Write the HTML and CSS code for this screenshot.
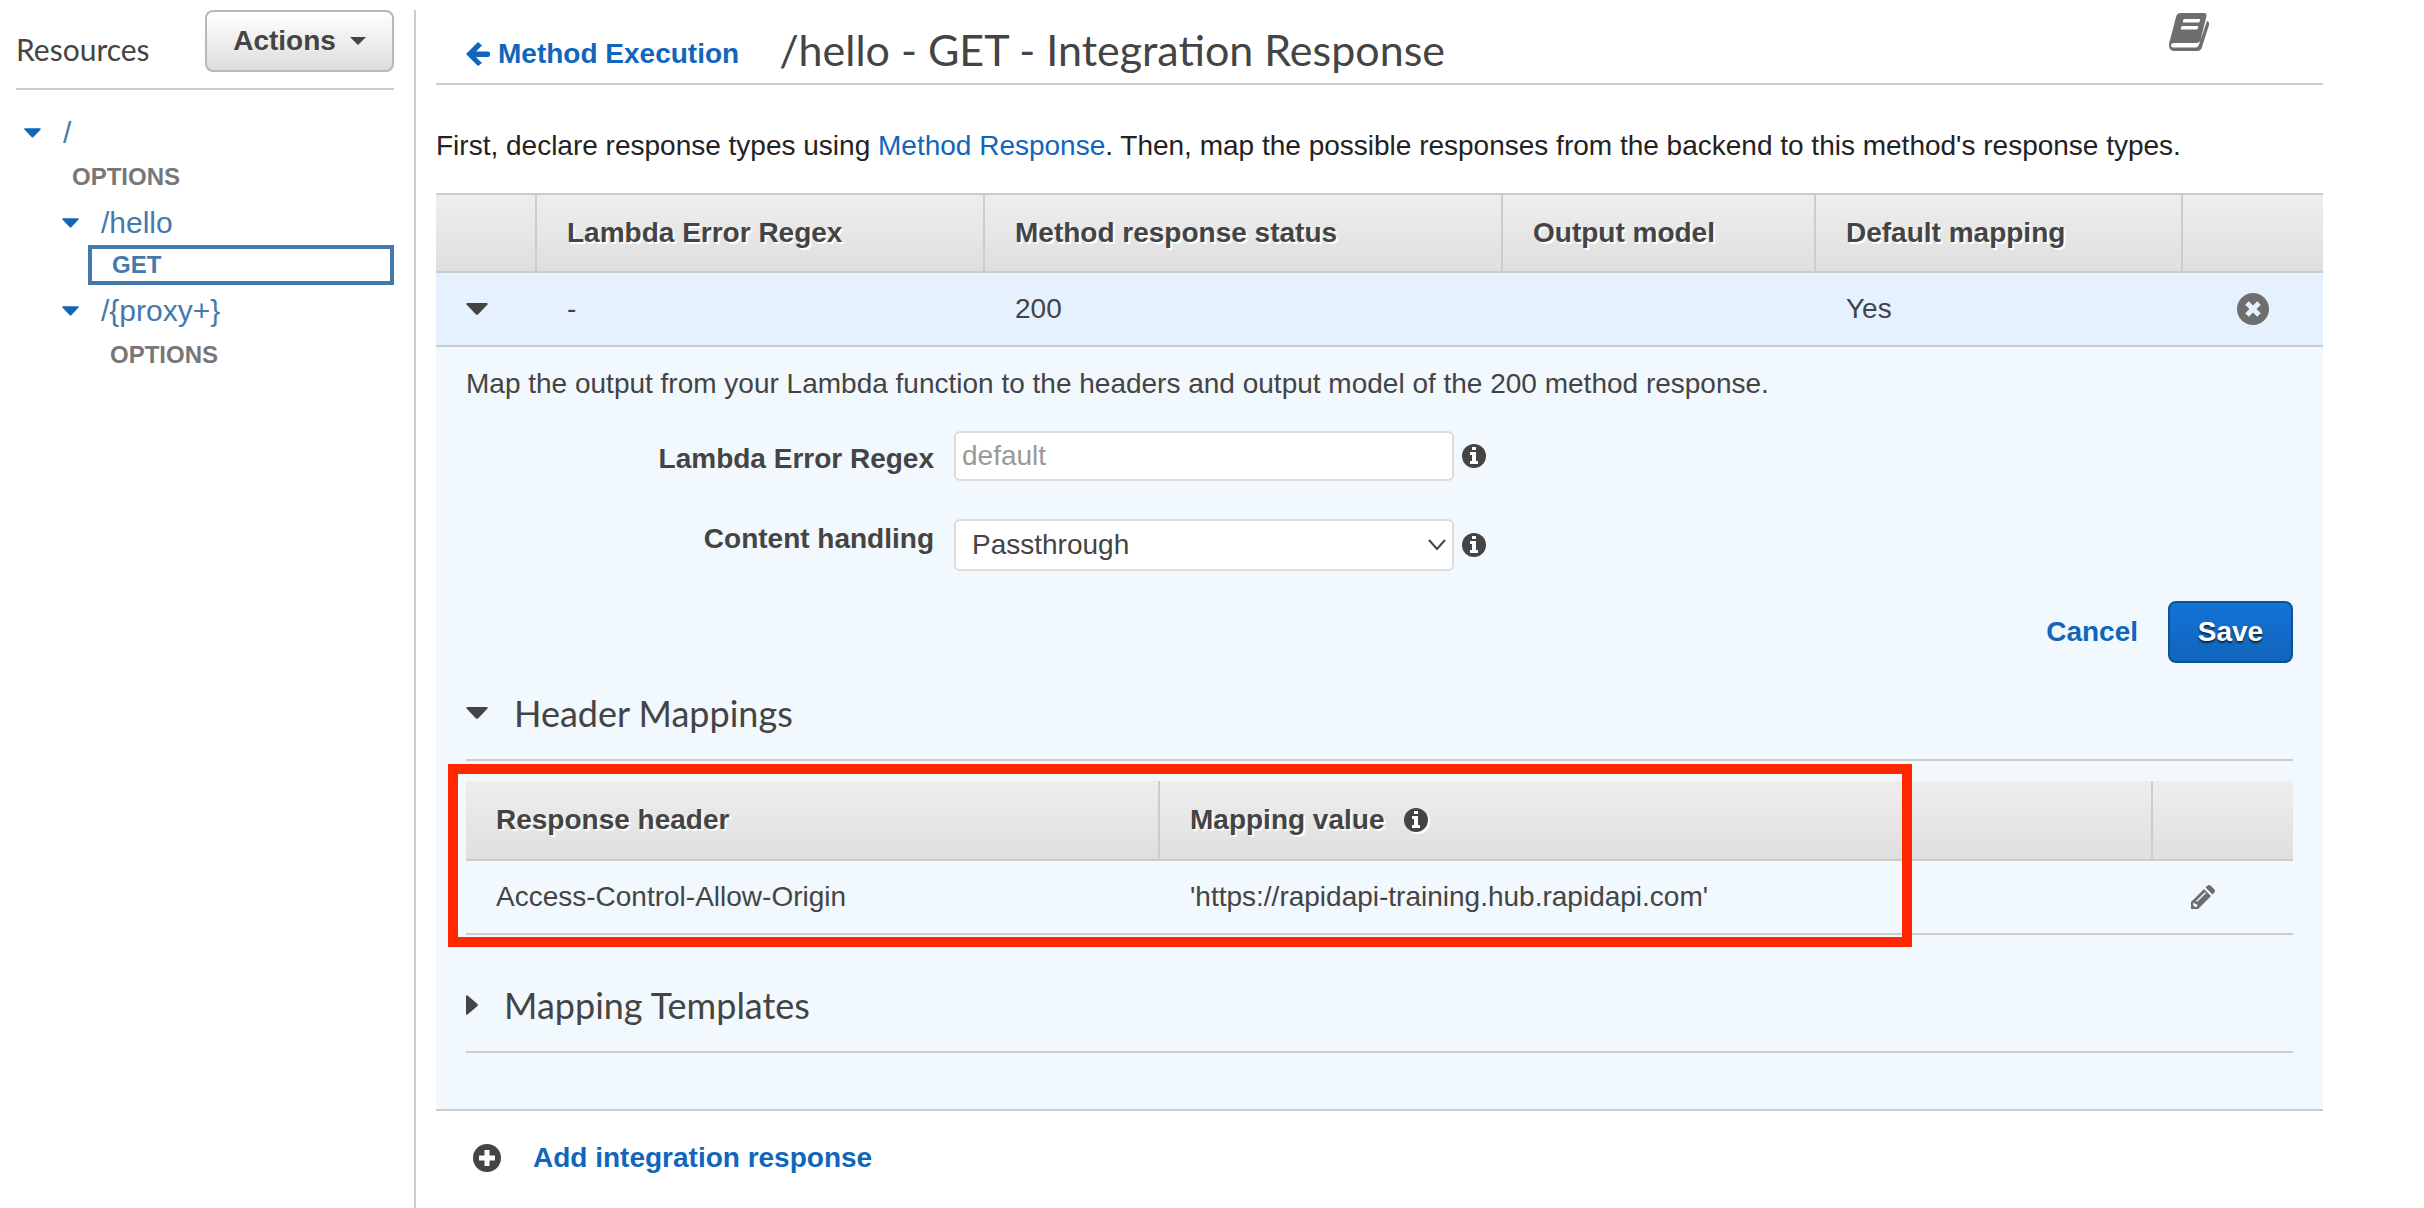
FILE: index.html
```html
<!DOCTYPE html>
<html lang="en">
<head>
    <meta charset="UTF-8">
    <meta name="viewport" content="width=device-width, initial-scale=1.0">
    <title>API Gateway - Integration Response</title>
    <link rel="stylesheet" href="styles.css">
</head>
<body>
    <!-- shared icons -->
    <svg class="sprite" aria-hidden="true">
        <symbol id="icon-info" viewBox="0 0 24 24">
            <circle cx="12" cy="12" r="12"/>
            <path fill="#fff" d="M10 3h4v3h-4zM8 8h6v9h2v3H8v-3h2v-6H8z"/>
        </symbol>
        <symbol id="icon-down" viewBox="0 0 22 12">
            <path d="M1 0h20q1 .5 .5 1.500L12 11.500q-1 .7-2 0L.5 1.500Q0 .5 1 0z"/>
        </symbol>
    </svg>

    <div class="layout">
        <aside class="sidebar">
            <div class="sidebar-header">
                <h2 class="sidebar-title">Resources</h2>
                <button type="button" class="btn btn-actions">Actions
                    <svg class="btn-caret" viewBox="0 0 16 8"><path d="M0 0h16L8 8z"/></svg>
                </button>
            </div>
            <ul class="tree">
                <li>
                    <a href="#" class="resource"><svg class="tree-caret"><use href="#icon-down"/></svg>/</a>
                    <a href="#" class="method">OPTIONS</a>
                    <ul class="subtree">
                        <li>
                            <a href="#" class="resource"><svg class="tree-caret"><use href="#icon-down"/></svg>/hello</a>
                            <a href="#" class="method selected">GET</a>
                        </li>
                        <li>
                            <a href="#" class="resource"><svg class="tree-caret"><use href="#icon-down"/></svg>/{proxy+}</a>
                            <a href="#" class="method">OPTIONS</a>
                        </li>
                    </ul>
                </li>
            </ul>
        </aside>

        <main class="main">
            <header class="page-header">
                <a href="#" class="back-link">
                    <svg class="back-arrow" viewBox="0 0 24 24"><path d="M12 0l4 3.500-6 6h12q2 0 2 2v1.500q0 2-2 2H10l6 6-4 3L0 12z"/></svg>
                    Method Execution
                </a>
                <h1 class="page-title">/hello - GET - Integration Response</h1>
                <a href="#" class="docs-link" aria-label="Documentation">
                    <svg class="docs-icon" viewBox="0 0 40 38">
                        <path fill-rule="evenodd" d="M12 0h23q3 0 2.500 3l-6 24q-1 3-4 3H5q-3 0-3 2.500 0 2 3 2h22q2 0 3-3L38 8q3 1 2 4l-7 22q-1 4-5 4H6q-6 0-6-6 0-3 1-5L7 4q1-4 5-4zM15 6q-1.500 1.500-1 3.500h16q1.500-1.500 1-3.500zM13 13q-1.500 1.500-1 3.500h16q1.500-1.500 1-3.500z"/>
                    </svg>
                </a>
            </header>

            <p class="intro">First, declare response types using <a href="#">Method Response</a>. Then, map the possible responses from the backend to this method's response types.</p>

            <table class="grid responses">
                <colgroup>
                    <col class="col-toggle"><col class="col-regex"><col class="col-status"><col class="col-model"><col class="col-default"><col class="col-remove">
                </colgroup>
                <thead>
                    <tr>
                        <th></th>
                        <th>Lambda Error Regex</th>
                        <th>Method response status</th>
                        <th>Output model</th>
                        <th>Default mapping</th>
                        <th></th>
                    </tr>
                </thead>
                <tbody>
                    <tr>
                        <td><button type="button" class="icon-btn" aria-label="Collapse"><svg class="caret"><use href="#icon-down"/></svg></button></td>
                        <td>-</td>
                        <td>200</td>
                        <td></td>
                        <td>Yes</td>
                        <td class="icon-cell">
                            <button type="button" class="icon-btn" aria-label="Remove">
                                <svg class="remove-icon" viewBox="0 0 32 32"><circle cx="16" cy="16" r="16"/><path d="M10 10l12 12M22 10L10 22"/></svg>
                            </button>
                        </td>
                    </tr>
                </tbody>
            </table>

            <section class="panel">
                <p class="panel-text">Map the output from your Lambda function to the headers and output model of the 200 method response.</p>

                <form class="form">
                    <div class="form-row">
                        <label for="regex" class="label-input">Lambda Error Regex</label>
                        <input id="regex" class="field" type="text" placeholder="default">
                        <svg class="info"><use href="#icon-info"/></svg>
                    </div>
                    <div class="form-row">
                        <label for="handling">Content handling</label>
                        <span class="select-wrap">
                            <select id="handling" class="field field-select">
                                <option>Passthrough</option>
                            </select>
                            <svg class="chevron" viewBox="0 0 18 12"><path d="M1 1l8 9 8-9"/></svg>
                        </span>
                        <svg class="info"><use href="#icon-info"/></svg>
                    </div>
                    <div class="form-actions">
                        <a href="#" class="cancel">Cancel</a>
                        <button type="button" class="btn btn-save">Save</button>
                    </div>
                </form>

                <h3 class="section-title"><svg class="caret"><use href="#icon-down"/></svg>Header Mappings</h3>

                <div class="mappings-wrap">
                    <table class="grid mappings">
                        <colgroup>
                            <col class="col-header"><col class="col-value"><col class="col-edit">
                        </colgroup>
                        <thead>
                            <tr>
                                <th>Response header</th>
                                <th><span class="th-label">Mapping value <svg class="info"><use href="#icon-info"/></svg></span></th>
                                <th></th>
                            </tr>
                        </thead>
                        <tbody>
                            <tr>
                                <td>Access-Control-Allow-Origin</td>
                                <td>'https://rapidapi-training.hub.rapidapi.com'</td>
                                <td class="edit-cell">
                                    <button type="button" class="icon-btn" aria-label="Edit">
                                        <svg class="edit-icon" viewBox="0 0 24 24">
                                            <path fill-rule="evenodd" d="M0 17L13 4l7 7L7 24H0zM2 18.500V20l2 2h1.500l1-1.500-1-1.500H4l-.5-1.500zM5 16l1 1 9-9-1-1z"/>
                                            <path d="M14.500 2.500L16 1q2-2 4 0l3 3q2 2 0 4l-1.500 1.500z"/>
                                        </svg>
                                    </button>
                                </td>
                            </tr>
                        </tbody>
                    </table>
                    <div class="highlight"></div>
                </div>

                <h3 class="section-title collapsed"><svg class="caret-right" viewBox="0 0 12 20"><path d="M0 1q.5-1 1.500-.5L11.500 9q.7 1 0 2L1.500 19.500Q.5 20 0 19z"/></svg>Mapping Templates</h3>
            </section>

            <a href="#" class="add-link">
                <svg class="add-icon" viewBox="0 0 28 28"><circle cx="14" cy="14" r="14"/><path d="M14 6v16M6 14h16"/></svg>
                Add integration response
            </a>
        </main>
    </div>
</body>
</html>
```
FILE: styles.css
```css
* {
    box-sizing: border-box;
}

body {
    margin: 0;
    background: #fff;
    color: #444;
    font-family: "Helvetica Neue", "Liberation Sans", Arial, sans-serif;
    font-size: 28px;
    line-height: 40px;
}

a {
    color: #1166bb;
    text-decoration: none;
}

h1, h2, h3, p, ul {
    margin: 0;
    padding: 0;
    font-weight: normal;
}

button, input, select {
    font: inherit;
    color: inherit;
}

svg {
    fill: currentColor;
    flex: none;
}

.sprite {
    position: absolute;
    width: 0;
    height: 0;
}

.layout {
    display: flex;
    min-height: 100vh;
    padding-top: 10px;
}

/* Sidebar */
.sidebar {
    width: 416px;
    flex: none;
    padding: 0 20px 0 16px;
    border-right: 2px solid #ccc;
}

.sidebar-header {
    display: flex;
    justify-content: space-between;
    align-items: flex-start;
    height: 80px;
    border-bottom: 2px solid #ccc;
}

.sidebar-title {
    font-family: Lato, sans-serif;
    font-size: 30px;
    line-height: 78px;
}

.btn {
    display: flex;
    align-items: center;
    justify-content: center;
    height: 62px;
    border-radius: 8px;
    font-weight: bold;
    cursor: pointer;
}

.btn-actions {
    gap: 14px;
    width: 189px;
    border: 2px solid #b8b8b8;
    background: linear-gradient(#fff, #ddd);
}

.btn-caret {
    width: 16px;
    height: 8px;
}

.tree {
    padding-top: 19px;
    list-style: none;
}

.subtree {
    padding-left: 38px;
    list-style: none;
}

.resource {
    display: flex;
    align-items: center;
    gap: 22px;
    height: 46px;
    padding: 2px 0 0 8px;
    color: #4479ad;
    font-size: 30px;
}

.tree-caret {
    width: 17px;
    height: 10px;
    color: #1166bb;
}

.method {
    display: block;
    padding-left: 56px;
    color: #777;
    font-size: 24px;
    font-weight: bold;
    line-height: 44px;
}

.method.selected {
    margin: 0 0 2px 34px;
    padding-left: 20px;
    border: 4px solid #4479ad;
    color: #4479ad;
    line-height: 32px;
}

/* Main column */
.main {
    flex: 1;
    min-width: 0;
    padding: 0 101px 0 20px;
}

.page-header {
    display: flex;
    align-items: baseline;
    height: 75px;
    padding: 6px 0 0 30px;
    border-bottom: 2px solid #ccc;
}

.back-link {
    display: flex;
    align-items: center;
    gap: 8px;
    font-weight: bold;
}

.back-arrow {
    width: 24px;
    height: 24px;
}

.page-title {
    margin-left: 40px;
    font-family: Lato, sans-serif;
    font-size: 43px;
    line-height: 68px;
}

.docs-link {
    align-self: flex-start;
    margin: -3px 114px 0 auto;
    color: #6e6e6e;
    line-height: 0;
}

.docs-icon {
    width: 40px;
    height: 38px;
}

.intro {
    padding: 41px 0 27px;
    color: #222;
}

/* Tables */
.grid {
    width: 100%;
    table-layout: fixed;
    border-collapse: separate;
    border-spacing: 0;
}

.grid th {
    height: 78px;
    padding: 0 30px;
    border-right: 2px solid #ccc;
    border-bottom: 2px solid #ccc;
    background: linear-gradient(#eee, #dfdfdf);
    text-align: left;
    text-shadow: 2px 2px 0 #fff;
}

.grid th:last-child {
    border-right: 0;
}

.grid td {
    height: 74px;
    padding: 0 30px;
    border-bottom: 2px solid #ccc;
}

.responses {
    border-top: 2px solid #ccc;
}

.responses td {
    background: #e5f1fe;
}

.col-toggle { width: 101px; }
.col-regex { width: 448px; }
.col-status { width: 518px; }
.col-model { width: 313px; }
.col-default { width: 367px; }
.col-remove { width: 140px; }

.col-header { width: 694px; }
.col-value { width: 993px; }
.col-edit { width: 140px; }

.grid .icon-cell {
    padding: 0;
    text-align: center;
}

.grid .edit-cell {
    padding-left: 38px;
}

.icon-btn {
    display: flex;
    padding: 0;
    border: 0;
    background: none;
}

.icon-cell .icon-btn {
    margin: auto;
}

.caret {
    width: 22px;
    height: 12px;
}

.caret-right {
    width: 12px;
    height: 20px;
}

.remove-icon {
    width: 32px;
    height: 32px;
    color: #6e6e6e;
}

.remove-icon path {
    stroke: #e5f1fe;
    stroke-width: 5;
}

.edit-icon {
    width: 24px;
    height: 24px;
    color: #6e6e6e;
}

.info {
    width: 24px;
    height: 24px;
}

.th-label {
    display: flex;
    align-items: center;
    gap: 20px;
}

.th-label .info {
    filter: drop-shadow(2px 2px 0 #fff);
}

/* Expanded response */
.panel {
    padding: 17px 30px 56px;
    border-bottom: 2px solid #ccc;
    background: #f1f8fe;
}

.form {
    padding-top: 27px;
}

.form-row {
    display: flex;
    align-items: flex-start;
    gap: 8px;
    margin-bottom: 38px;
}

.form-row label {
    width: 468px;
    margin-right: 12px;
    font-weight: bold;
    text-align: right;
}

.form-row .label-input {
    padding-top: 8px;
}

.form-row .info {
    align-self: center;
}

.field {
    width: 500px;
    height: 50px;
    padding: 0 6px;
    border: 2px solid #ddd;
    border-radius: 6px;
    background: #fff;
}

.field::placeholder {
    color: #999;
    opacity: 1;
}

.select-wrap {
    display: flex;
    position: relative;
}

.field-select {
    height: 52px;
    padding-left: 16px;
    appearance: none;
}

.chevron {
    position: absolute;
    top: 20px;
    right: 8px;
    width: 18px;
    height: 12px;
    fill: none;
    stroke: #444;
    stroke-width: 2;
    pointer-events: none;
}

.form-actions {
    display: flex;
    justify-content: flex-end;
    align-items: center;
    gap: 30px;
    margin-top: -8px;
}

.cancel {
    font-weight: bold;
}

.btn-save {
    width: 125px;
    border: 2px solid #0b5299;
    background: linear-gradient(#1472d6, #1165bb);
    color: #fff;
    text-shadow: 0 2px 2px #123;
}

.section-title {
    display: flex;
    align-items: center;
    gap: 26px;
    height: 98px;
    padding-top: 4px;
    border-bottom: 2px solid #ccc;
    font-family: Lato, sans-serif;
    font-size: 36px;
}

.section-title.collapsed {
    height: 118px;
    padding-top: 24px;
}

.mappings-wrap {
    position: relative;
    padding-top: 20px;
}

.mappings th {
    height: 80px;
}

/* Red callout round the header mapping */
.highlight {
    position: absolute;
    top: 3px;
    right: 381px;
    bottom: -12px;
    left: -18px;
    border: 10px solid #ff2600;
    pointer-events: none;
}

.add-link {
    display: inline-flex;
    align-items: center;
    gap: 32px;
    padding: 27px 0 0 37px;
    font-weight: bold;
}

.add-icon {
    width: 28px;
    height: 28px;
    color: #444;
}

.add-icon path {
    stroke: #fff;
    stroke-width: 5;
}
```
